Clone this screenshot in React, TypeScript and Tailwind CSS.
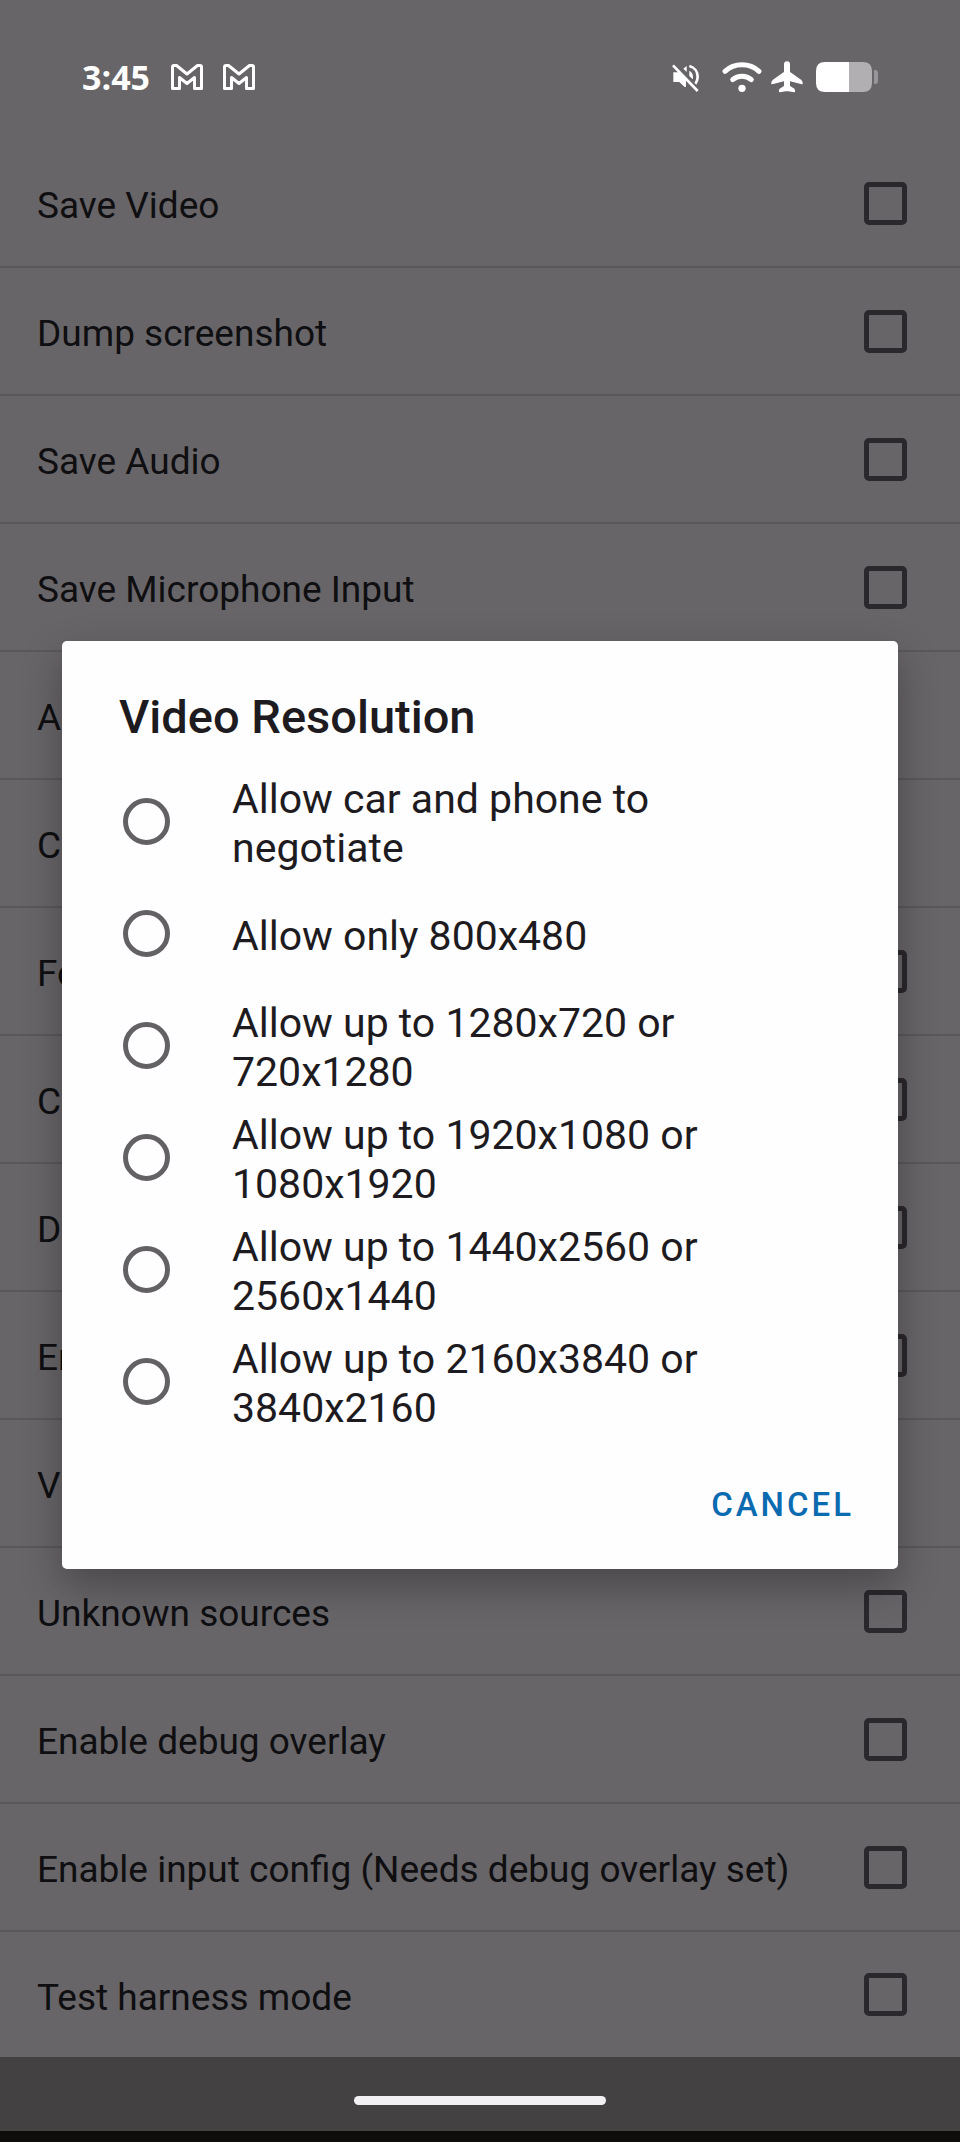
import { useState } from "react";

const settings = [
  { label: "Save Video", checkbox: true },
  { label: "Dump screenshot", checkbox: true },
  { label: "Save Audio", checkbox: true },
  { label: "Save Microphone Input", checkbox: true },
  { label: "A", checkbox: false },
  { label: "C", checkbox: false },
  { label: "Fo", checkbox: true },
  { label: "C", checkbox: true },
  { label: "D", checkbox: true },
  { label: "En", checkbox: true },
  { label: "V", checkbox: false },
  { label: "Unknown sources", checkbox: true },
  { label: "Enable debug overlay", checkbox: true },
  { label: "Enable input config (Needs debug overlay set)", checkbox: true },
  { label: "Test harness mode", checkbox: true },
];

const resolutions = [
  "Allow car and phone to negotiate",
  "Allow only 800x480",
  "Allow up to 1280x720 or 720x1280",
  "Allow up to 1920x1080 or 1080x1920",
  "Allow up to 1440x2560 or 2560x1440",
  "Allow up to 2160x3840 or 3840x2160",
];

function MailIcon() {
  return (
    <svg width="34" height="28" viewBox="0 0 34 28" fill="none" stroke="white" strokeWidth="3" strokeLinejoin="round">
      <path d="M2.5 25.5V4Q2.5 2.5 4 2.5H6.5L17 11L27.5 2.5H30Q31.5 2.5 31.5 4V25.5H24.5V14.5L17 20.5L9.5 14.5V25.5Z" />
    </svg>
  );
}

function MuteIcon() {
  return (
    <svg width="28" height="30" viewBox="0 0 84 90" fill="none" stroke="white">
      <path d="M4 31H20L42 53V74Q40 76 37 74L22 60H4Z" fill="white" stroke="none" />
      <path d="M44 12V30L34 20Z" fill="white" stroke="none" />
      <path d="M52 12C68 16 77 30 77 45C77 53 74 61 69 67" strokeWidth="8" />
      <path d="M52 26C61 31 65 41 62 52L52 42Z" fill="white" stroke="none" />
      <path d="M10 7L82 83" stroke="#676568" strokeWidth="7" />
      <path d="M3 10L77 87" strokeWidth="8" />
    </svg>
  );
}

function WifiIcon() {
  return (
    <svg width="40" height="32" viewBox="0 0 120 96" fill="none" stroke="white" strokeLinecap="round">
      <path d="M9 31C37 5 83 5 111 31" strokeWidth="15" />
      <path d="M32 56C48 42 72 42 88 56" strokeWidth="15" />
      <circle cx="60" cy="82" r="11" fill="white" stroke="none" />
    </svg>
  );
}

function AirplaneIcon() {
  return (
    <svg width="32" height="32" viewBox="0 0 96 96" fill="white" stroke="white" strokeWidth="4" strokeLinejoin="round">
      <path d="M48 3C52 3 55 6 55 10V34L90 59Q94 62 93 68L55 58V76L69 85Q71 88 70 92L48 88L26 92Q25 88 27 85L41 76V58L3 68Q2 62 6 59L41 34V10C41 6 44 3 48 3Z" />
    </svg>
  );
}

function BatteryIcon() {
  return (
    <svg width="64" height="32" viewBox="0 0 64 32">
      <path d="M9 1H33V31H9Q0 31 0 22V10Q0 1 9 1Z" fill="white" />
      <path d="M33 1H47Q56 1 56 10V22Q56 31 47 31H33Z" fill="#b1afb2" />
      <path d="M58 9H59Q62 9 62 12V20Q62 23 59 23H58Z" fill="#98969a" />
    </svg>
  );
}

function StatusBar() {
  return (
    <header className="flex h-[140px] items-center justify-between pt-3.5 pr-20 pl-[82px]">
      <div className="flex items-center gap-[18px]">
        <p className="pr-0.5 font-['Open_Sans',sans-serif] text-[34px] leading-10 font-bold text-white">3:45</p>
        <MailIcon />
        <MailIcon />
      </div>
      <div className="flex items-center">
        <MuteIcon />
        <div className="ml-[22px] flex items-center gap-[9px]">
          <WifiIcon />
          <AirplaneIcon />
        </div>
        <div className="ml-[13px]">
          <BatteryIcon />
        </div>
      </div>
    </header>
  );
}

function ResolutionDialog() {
  const [selected, setSelected] = useState("");

  return (
    <div className="absolute inset-0 flex items-center justify-center px-[62px] pt-[140px] pb-[72px]">
      <div
        role="dialog"
        aria-labelledby="dialog-title"
        className="w-full rounded-[5px] bg-[#fefdff] pt-12 pb-[22px] shadow-[0_16px_40px_rgba(0,0,0,0.3)]"
      >
        <h1 id="dialog-title" className="px-[57px] text-[47px] leading-14 font-medium text-[#1d1b20]">
          Video Resolution
        </h1>
        <div className="mt-5">
          {resolutions.map((name) => (
            <label key={name} className="flex h-28 items-center gap-[62px] pr-[120px] pl-[61px]">
              <input
                type="radio"
                name="resolution"
                checked={selected === name}
                onChange={() => setSelected(name)}
                className="size-[47px] shrink-0 appearance-none rounded-full border-5 border-[#636164] checked:border-[14px] checked:border-[#0b6bb0]"
              />
              <span className="pt-1.5 text-[41px] leading-[49px] text-[#1d1b20]">{name}</span>
            </label>
          ))}
        </div>
        <div className="mt-[26px] flex justify-end pr-6">
          <button className="h-[84px] px-5 text-[33px] font-medium tracking-[3px] text-[#0b6bb0] uppercase">
            Cancel
          </button>
        </div>
      </div>
    </div>
  );
}

export default function App() {
  return (
    <div className="relative min-h-screen bg-[#676568] font-[Roboto,sans-serif]">
      <StatusBar />

      <main className="divide-y-2 divide-[#5a585b]">
        {settings.map((item, i) => (
          <label key={i} className="flex h-32 items-center justify-between pr-[53px] pl-[37px] last:h-[125px]">
            <span className="pt-1.5 text-[37px] leading-11 text-[#0f0e11]">{item.label}</span>
            {item.checkbox && (
              <input
                type="checkbox"
                className="size-[43px] shrink-0 appearance-none rounded-[5px] border-5 border-[#2a282c] checked:bg-[#2a282c]"
              />
            )}
          </label>
        ))}
      </main>

      {/* Gesture navigation bar */}
      <footer className="flex h-[85px] items-center justify-center border-b-[11px] border-[#0e0d0c] bg-[#434142] pt-3">
        <div className="h-[9px] w-[252px] rounded-full bg-[#f3f0f3]" />
      </footer>

      <ResolutionDialog />
    </div>
  );
}
